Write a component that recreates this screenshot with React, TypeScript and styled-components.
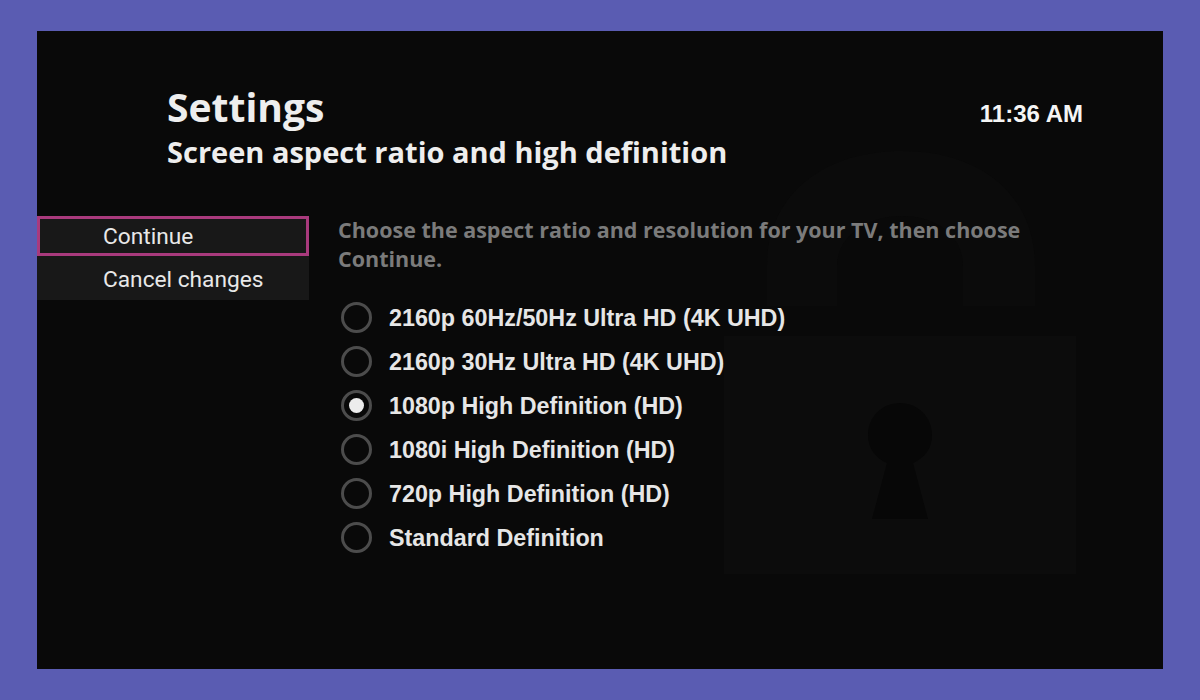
import React from 'react';
import styled, { createGlobalStyle } from 'styled-components';

const GlobalStyle = createGlobalStyle`
  html, body {
    margin: 0;
    padding: 0;
    background: #5a5cb2;
  }
`

const Page = styled.div`
  width: 1200px;
  height: 700px;
  padding: 31px 37px;
  box-sizing: border-box;
  background: #5a5cb2;
  overflow: hidden;
`

const Screen = styled.div`
  position: relative;
  height: 638px;
  background: #090909;
  font-family: 'Open Sans', 'Liberation Sans', sans-serif;
  color: #f0f0f0;
  overflow: hidden;
`

const Watermark = styled.svg`
  position: absolute;
  left: 680px;
  top: 110px;
`

const Header = styled.header`
  position: relative;
  display: flex;
  justify-content: space-between;
  padding: 54px 80px 0 130px;
  height: 185px;
  box-sizing: border-box;
`

const Title = styled.h1`
  margin: 0 0 1px;
  font-size: 39px;
  line-height: 44px;
  font-weight: 700;
  color: #eeeeee;
`

const Subtitle = styled.h2`
  margin: 0;
  font-size: 29px;
  line-height: 44px;
  font-weight: 700;
  color: #eeeeee;
`

const Clock = styled.div`
  padding-top: 15px;
  font-family: 'Liberation Sans', Arial, sans-serif;
  font-size: 24px;
  line-height: 28px;
  font-weight: 700;
  color: #f5f5f5;
`

const Body = styled.div`
  position: relative;
  display: flex;
  gap: 29px;
`

const Menu = styled.nav`
  width: 272px;
  flex-shrink: 0;
`

const MenuItem = styled.div<{ $active?: boolean }>`
  height: ${p => (p.$active ? '40px' : '44px')};
  padding-left: ${p => (p.$active ? '63px' : '66px')};
  padding-top: ${p => (p.$active ? '0' : '2px')};
  display: flex;
  align-items: center;
  box-sizing: border-box;
  background: #181818;
  border: ${p => (p.$active ? '3px solid #a93a7d' : 'none')};
  font-family: 'Roboto', 'Liberation Sans', sans-serif;
  font-size: 22.7px;
  color: #e8e8e8;
`

const Content = styled.main`
  width: 720px;
  margin-top: -1px;
`

const Intro = styled.p`
  margin: 0 0 22px;
  font-size: 21.5px;
  line-height: 29px;
  font-weight: 700;
  color: #7b7b7b;
`

const Options = styled.div`
  display: flex;
  flex-direction: column;
`

const Option = styled.div`
  display: flex;
  align-items: center;
  gap: 17px;
  height: 44px;
  font-family: 'Liberation Sans', Arial, sans-serif;
  font-size: 23.3px;
  font-weight: 700;
  color: #e6e6e6;
`

const OptionLabel = styled.span`
  padding-top: 2px;
`

const Radio = styled.span<{ $checked?: boolean }>`
  width: 31px;
  height: 31px;
  margin-left: 3px;
  box-sizing: border-box;
  border: 3px solid #4c4c4c;
  border-radius: 50%;
  display: flex;
  align-items: center;
  justify-content: center;
  &::after {
    content: '';
    display: ${p => (p.$checked ? 'block' : 'none')};
    width: 15px;
    height: 15px;
    border-radius: 50%;
    background: #ececec;
  }
`

const options = [
  '2160p 60Hz/50Hz Ultra HD (4K UHD)',
  '2160p 30Hz Ultra HD (4K UHD)',
  '1080p High Definition (HD)',
  '1080i High Definition (HD)',
  '720p High Definition (HD)',
  'Standard Definition',
];

const App = () => {
  return (
    <Page>
      <GlobalStyle />
      <Screen>
        <Watermark width="370" height="440" viewBox="0 0 370 440">
          {/* faint padlock behind the options */}
          <path
            d="M50 165 V125 C50 55 105 10 185 10 C265 10 318 55 318 125 V165 H246 V125 C246 95 220 75 185 75 C150 75 120 95 120 125 V165 Z"
            fill="#0b0b0b"
          />
          <rect x="7" y="195" width="352" height="238" fill="#0c0c0c" />
          <path
            d="M183 262 C165 262 151 276 151 294 C151 307 158 317 170 322 L155 378 H211 L196 322 C208 317 215 307 215 294 C215 276 201 262 183 262 Z"
            fill="#070707"
          />
        </Watermark>
        <Header>
          <div>
            <Title>Settings</Title>
            <Subtitle>Screen aspect ratio and high definition</Subtitle>
          </div>
          <Clock>11:36 AM</Clock>
        </Header>
        <Body>
          <Menu>
            <MenuItem $active>Continue</MenuItem>
            <MenuItem>Cancel changes</MenuItem>
          </Menu>
          <Content>
            <Intro>
              Choose the aspect ratio and resolution for your TV, then choose
              <br />
              Continue.
            </Intro>
            <Options>
              {options.map((label, i) => (
                <Option key={label}>
                  <Radio $checked={i === 2} />
                  <OptionLabel>{label}</OptionLabel>
                </Option>
              ))}
            </Options>
          </Content>
        </Body>
      </Screen>
    </Page>
  );
};

export default App;
